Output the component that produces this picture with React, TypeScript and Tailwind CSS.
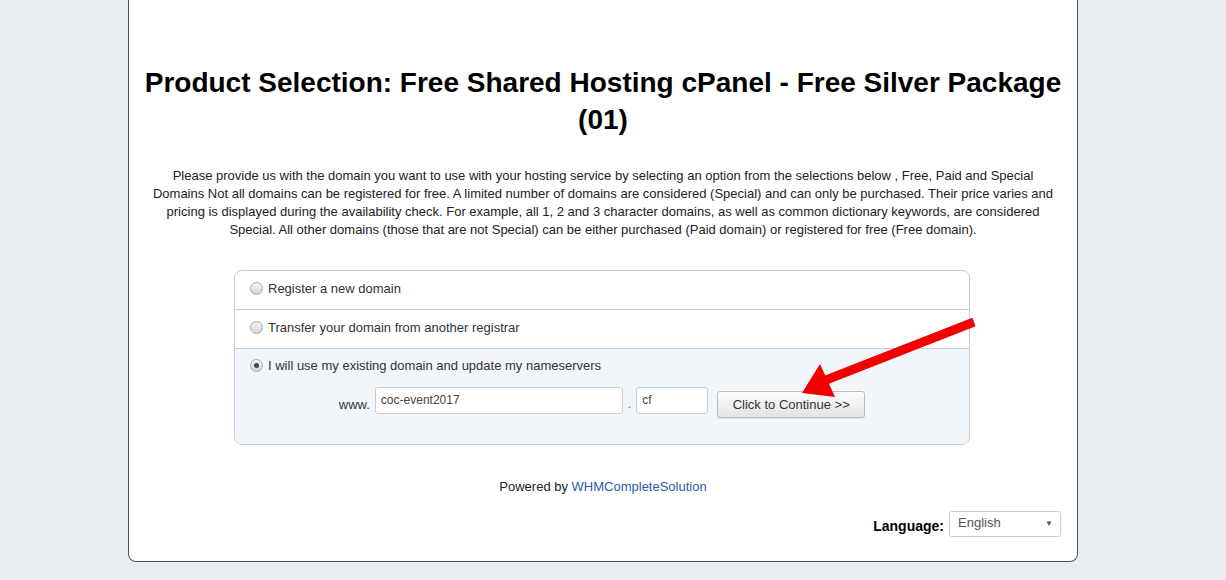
const Radio = ({ checked = false }: { checked?: boolean }) => (
  <span className="inline-flex h-[13px] w-[13px] shrink-0 items-center justify-center rounded-full border border-[#a9a9a9] bg-gradient-to-b from-[#f4f4f4] to-[#d6d6d6]">
    {checked && <span className="h-[5px] w-[5px] rounded-full bg-[#444]" />}
  </span>
);

const options = [
  { label: "Register a new domain", checked: false },
  { label: "Transfer your domain from another registrar", checked: false },
];

const App = () => {
  return (
    <div className="min-h-[580px] bg-[#e9edf0] font-['Liberation_Sans',Arial,sans-serif] text-[#111]">
      <div className="relative ml-[128px] w-[950px] rounded-b-lg border-x border-b border-[#555] bg-white px-5 pb-6 pt-[64px]">
        <h1 className="-mx-3 text-center text-[28px] font-bold leading-[37px] text-black">
          Product Selection: Free Shared Hosting cPanel - Free Silver Package (01)
        </h1>

        <p className="mt-[29px] text-center text-[13px] leading-[18px] text-[#222]">
          Please provide us with the domain you want to use with your hosting service by selecting an option from the selections below , Free, Paid and Special Domains Not all domains can be registered for free. A limited number of domains are considered (Special) and can only be purchased. Their price varies and pricing is displayed during the availability check. For example, all 1, 2 and 3 character domains, as well as common dictionary keywords, are considered Special. All other domains (those that are not Special) can be either purchased (Paid domain) or registered for free (Free domain).
        </p>

        <div className="ml-[85px] mt-[31px] w-[736px] overflow-hidden rounded-lg border border-[#c8ccd0] text-[13px] leading-[19px] text-[#333]">
          {options.map((o) => (
            <div key={o.label} className="flex h-[39px] items-center gap-[5px] border-b border-[#c8ccd0] px-[15px] pb-[3px]">
              <Radio checked={o.checked} />
              <span>{o.label}</span>
            </div>
          ))}
          <div className="bg-[#f1f6fb] px-[15px] pb-[26px] pt-[7px]">
            <div className="flex items-center gap-[5px]">
              <Radio checked />
              <span>I will use my existing domain and update my nameservers</span>
            </div>
            <div className="mt-[12px] flex items-start justify-center">
              <span className="mr-[5px] mt-[8px] text-[13px] text-[#333]">www.</span>
              <div className="h-[27px] w-[248px] rounded-[3px] border border-[#ccc] bg-white px-[5px] pt-[3px] text-[12px] text-[#444]">
                coc-event2017
              </div>
              <span className="mx-[5px] mt-[8px] text-[12px] text-[#666]">.</span>
              <div className="h-[27px] w-[72px] rounded-[3px] border border-[#ccc] bg-white px-[5px] pt-[3px] text-[12px] text-[#444]">
                cf
              </div>
              <button className="ml-[9px] mt-[4px] h-[27px] w-[148px] rounded-[3px] border border-[#bbb] bg-gradient-to-b from-[#fdfdfd] to-[#e4e4e4] text-[13px] text-[#333] shadow-[0_1px_1px_rgba(0,0,0,0.08)]">
                Click to Continue &gt;&gt;
              </button>
            </div>
          </div>
        </div>

        <p className="mt-[33px] text-center text-[13px] leading-[18px] text-[#222]">
          Powered by <a className="text-[#2d5aa8]">WHMCompleteSolution</a>
        </p>

        <div className="mt-[15px] flex items-center justify-end gap-[5px]">
          <span className="mt-[4px] text-[14px] font-bold text-black">Language:</span>
          <div className="mr-[-4px] flex h-[26px] w-[112px] items-center justify-between rounded-[3px] border border-[#ccc] bg-white pl-[8px] pr-[7px] text-[13px] text-[#555]">
            <span className="-mt-[2px]">English</span>
            <span className="text-[8px] text-[#555]">▼</span>
          </div>
        </div>

        <svg
          className="pointer-events-none absolute left-[667px] top-[315px]"
          width="190"
          height="90"
          viewBox="0 0 190 90"
        >
          <line x1="30" y1="65" x2="178" y2="7" stroke="#f20000" strokeWidth="9" />
          <polygon points="6,78 24,49 39,82" fill="#f20000" />
        </svg>
      </div>
    </div>
  );
};

export default App;
